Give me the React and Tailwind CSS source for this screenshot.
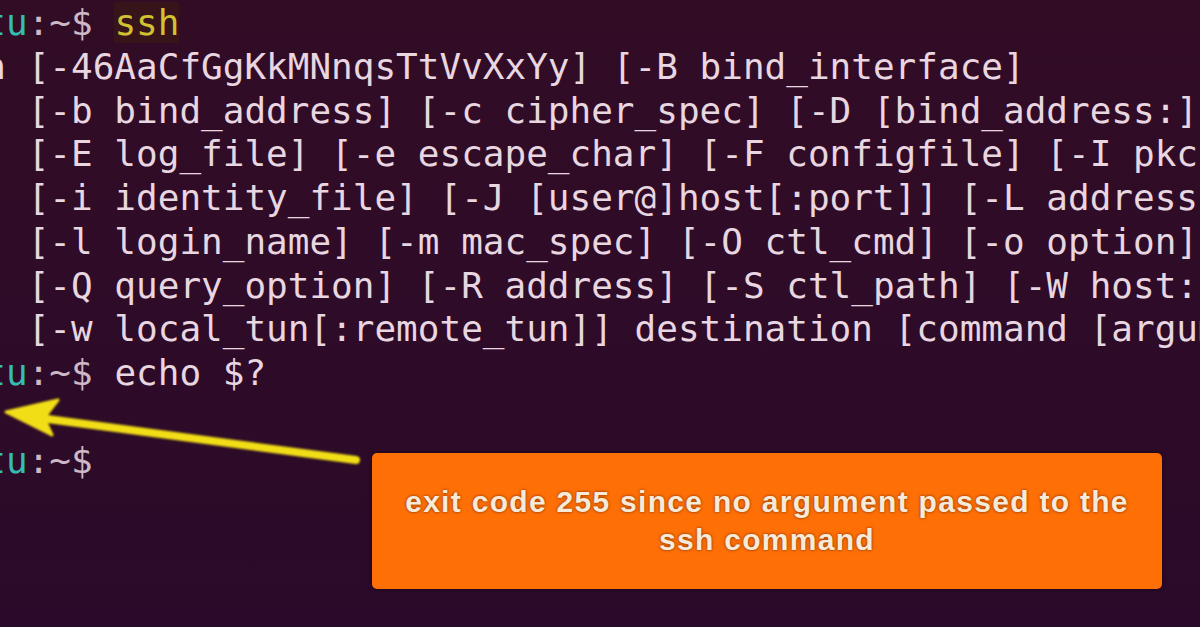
import React from "react";

const mono = { fontFamily: '"DejaVu Sans Mono", "Liberation Mono", monospace' };

const lines = [
  "h [-46AaCfGgKkMNnqsTtVvXxYy] [-B bind_interface]",
  "  [-b bind_address] [-c cipher_spec] [-D [bind_address:]port]",
  "  [-E log_file] [-e escape_char] [-F configfile] [-I pkcs11]",
  "  [-i identity_file] [-J [user@]host[:port]] [-L address]",
  "  [-l login_name] [-m mac_spec] [-O ctl_cmd] [-o option] [-p port]",
  "  [-Q query_option] [-R address] [-S ctl_path] [-W host:port]",
  "  [-w local_tun[:remote_tun]] destination [command [argument ...]]",
];

function Prompt() {
  return (
    <>
      <span className="text-[#34bdb0]">tu</span>
      <span className="text-[#cdb9c6]">:~$</span>
    </>
  );
}

export default function App() {
  return (
    <div className="relative w-[1200px] h-[627px] overflow-hidden bg-linear-to-b from-[#320c25] to-[#2a0a2a]">
      <div
        className="-ml-[15.7px] pt-[1px] text-[36px] leading-[43.75px] whitespace-pre text-[#e8d6e0]"
        style={mono}
      >
        <div>
          <Prompt />
          <span className="text-[#d2c232]"> </span>
          <span className="bg-[#36141a] text-[#d2c232]">ssh</span>
        </div>
        {lines.map((l, i) => (
          <div key={i}>{l}</div>
        ))}
        <div>
          <Prompt />
          <span> echo $?</span>
        </div>
        <div>{" "}</div>
        <div>
          <Prompt />
        </div>
      </div>

      <svg
        className="absolute inset-0 pointer-events-none"
        width="1200"
        height="627"
        viewBox="0 0 1200 627"
      >
        <defs>
          <filter id="glow" x="-10%" y="-50%" width="120%" height="200%">
            <feGaussianBlur stdDeviation="1.2" />
          </filter>
        </defs>
        <g filter="url(#glow)">
          <line x1="40" y1="418" x2="356" y2="460" stroke="#f2de16" strokeWidth="8" strokeLinecap="round" />
          <polygon points="6,412 58,400 44,418 52,435" fill="#f2de16" stroke="#f2de16" strokeWidth="3" strokeLinejoin="round" />
        </g>
      </svg>

      <div className="absolute left-[372px] top-[453px] w-[790px] h-[136px] rounded-[5px] bg-[#fe6f06] flex items-center justify-center shadow-[0_0_4px_rgba(0,0,0,0.5)]">
        <div
          className="text-center font-bold text-[30px] leading-[38px] tracking-[1.3px] text-[#f8ead8] [text-shadow:0_0_3px_rgba(90,30,0,0.85)]"
          style={{ fontFamily: '"Liberation Sans", Arial, sans-serif' }}
        >
          <div>exit code 255 since no argument passed to the</div>
          <div>ssh command</div>
        </div>
      </div>
    </div>
  );
}
